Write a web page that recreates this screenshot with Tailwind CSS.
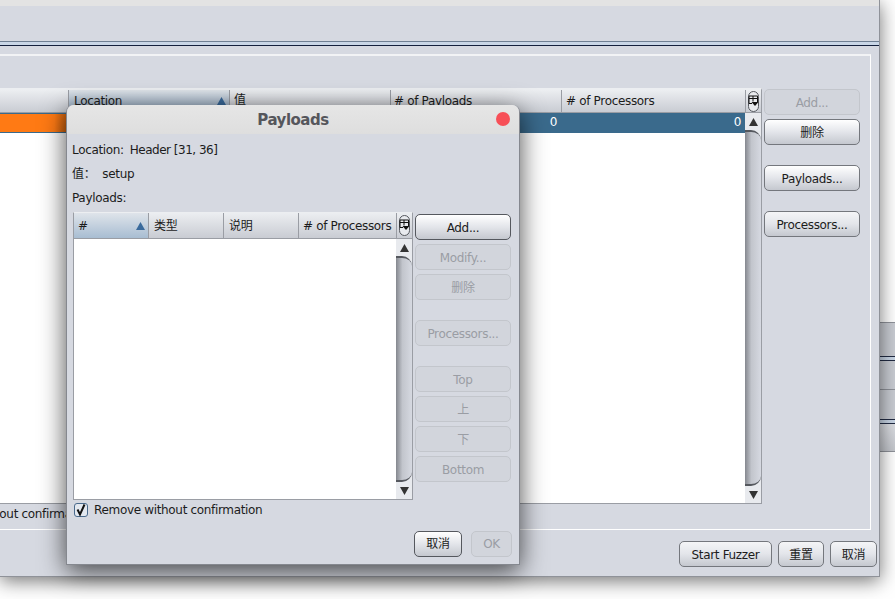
<!DOCTYPE html>
<html lang="zh">
<head>
    <meta charset="UTF-8">
    <title>Payloads</title>
    <script src="https://cdn.jsdelivr.net/npm/@tailwindcss/browser@4"></script>
</head>
<body class="bg-white">
<div class="relative w-[895px] h-[599px] overflow-hidden bg-white text-[12px] leading-[14px] tracking-[-0.33px] text-[#1c1c1c] font-['DejaVu_Sans','Noto_Sans_CJK_SC',sans-serif]">

    <!-- window peeking out behind the main one -->
    <div class="absolute left-[860px] top-[322px] w-[35px] h-[130px] bg-[#c9ccd3] border-y border-[#8f9299] flex flex-col">
        <div class="h-[33px]"></div>
        <div class="h-[5px] bg-[#c9d6e6] border-y border-[#222c44]"></div>
        <div class="h-[29px] border-b border-[#8f9299]"></div>
        <div class="h-[29px]"></div>
        <div class="h-[5px] bg-[#c9d6e6] border-y border-[#222c44]"></div>
        <div class="flex-1 bg-gradient-to-b from-[#dcdee3] to-[#c3c6cc]"></div>
    </div>

    <!-- main window -->
    <div class="absolute left-0 top-0 w-[880px] h-[577px] bg-[#d6d9e1] border-r border-b border-[#8f9299] shadow-[0_4px_18px_rgba(0,0,0,0.55)] flex flex-col">
        <div class="h-[6px] bg-[#e3e3e3] shrink-0"></div>
        <div class="h-[35px] shrink-0"></div>
        <div class="h-[5px] shrink-0 bg-[#c9d6e6] border-t border-b border-t-[#6f7f92] border-b-[#14203c]"></div>
        <div class="h-[8px] shrink-0"></div>

        <!-- tab panel -->
        <div class="w-[871px] h-[476px] shrink-0 border-t-2 border-r border-b border-t-[#f2f3f5] border-r-white border-b-white flex flex-col">
            <div class="h-[32px] shrink-0"></div>
            <div class="flex gap-[2px] h-[416px] shrink-0">
                <div class="w-[762px] h-full border-t-2 border-r border-b border-t-[#eceef1] border-r-[#9a9da4] border-b-[#9a9da4] flex flex-col bg-white">
                    <div class="h-[23px] shrink-0 flex bg-gradient-to-b from-[#eceef1] to-[#c9ccd3] border-b border-[#9a9da4] overflow-hidden whitespace-nowrap">
                        <div class="w-[69px] border-r border-[#9a9da4]"></div>
                        <div class="w-[161px] flex justify-between items-center pl-[5px] pr-[3px] border-r border-[#9a9da4] bg-gradient-to-b from-[#dfe4ea] to-[#91a9c1]">
                            <span>Location</span>
                            <svg width="9" height="8" viewBox="0 0 9 8"><path d="M4.5 0 L9 8 L0 8 Z" fill="#3a6a9c"/></svg>
                        </div>
                        <div class="w-[161px] pl-[4px] pt-[3px] border-r border-[#9a9da4]">值</div>
                        <div class="w-[171px] pl-[3px] pt-[4px] border-r border-[#9a9da4]"># of Payloads</div>
                        <div class="w-[184px] pl-[4px] pt-[4px] border-r border-[#9a9da4]"># of Processors</div>
                        <div class="flex-1 flex items-center justify-center">
                            <div class="w-[11px] h-[21px] rounded-full border border-[#55585e] bg-[#e8eaee] flex items-start justify-center pt-[3px]">
                                <svg width="11" height="12" viewBox="0 0 11 12" class="shrink-0"><path d="M1 1 H9.5 V7 M1 1 V8.5 H4 M1 3.5 H9.5 M5 1 V6.5" fill="none" stroke="#111"/><path d="M3.5 7 H10.5 L7 11 Z" fill="#111"/></svg>
                            </div>
                        </div>
                    </div>
                    <div class="flex-1 flex min-h-0">
                        <div class="flex-1 bg-white">
                            <div class="h-[20px] bg-[#3a6a8c] text-white flex pt-[2px]">
                                <div class="w-[68px] h-[18px] -mt-[1px] bg-gradient-to-r from-[#ff7a14] from-80% to-[#c9610f]"></div>
                                <div class="w-[491px] text-right pr-[2px]">0</div>
                                <div class="flex-1 text-right pr-[4px]">0</div>
                            </div>
                        </div>
                        <div class="w-[16px] flex flex-col bg-[#e8eaee]">
                            <div class="h-[17px] shrink-0 flex items-center justify-center">
                                <svg width="9" height="8" viewBox="0 0 9 8"><path d="M4.5 0 L9 8 L0 8 Z" fill="#333"/></svg>
                            </div>
                            <div class="flex-1 rounded-r-[10px] border-y-2 border-y-[#55585e] bg-gradient-to-r from-[#85888f] via-[#c2c5cc] via-40% to-[#d6d9e1]"></div>
                            <div class="h-[17px] shrink-0 flex items-center justify-center">
                                <svg width="9" height="8" viewBox="0 0 9 8"><path d="M0 0 L9 0 L4.5 8 Z" fill="#333"/></svg>
                            </div>
                        </div>
                    </div>
                </div>
                <div class="w-[96px] flex flex-col">
                    <button class="h-[26px] mt-[1px] pt-[2px] shrink-0 rounded-[5px] border border-[#c3c6cc] text-[#9a9da4] bg-[#d2d5dc]">Add...</button>
                    <button class="h-[26px] mt-[4px] pt-[2px] shrink-0 rounded-[5px] border border-[#74777d] bg-gradient-to-b from-white via-[#e3e5ea] to-[#c5c8cf]">删除</button>
                    <button class="h-[26px] mt-[20px] pt-[2px] shrink-0 rounded-[5px] border border-[#74777d] bg-gradient-to-b from-white via-[#e3e5ea] to-[#c5c8cf]">Payloads...</button>
                    <button class="h-[26px] mt-[20px] pt-[2px] shrink-0 rounded-[5px] border border-[#74777d] bg-gradient-to-b from-[#f4f5f7] via-[#e3e5ea] to-[#c5c8cf]">Processors...</button>
                </div>
            </div>
            <div class="h-[25px] shrink-0 overflow-hidden whitespace-nowrap pt-[3px]"><span class="block -ml-[75px]">Remove without confirmation</span></div>
        </div>

        <div class="flex justify-end gap-[6px] pr-[2px] pt-[11px]">
            <button class="w-[93px] h-[26px] pt-[2px] rounded-[5px] border border-[#74777d] bg-gradient-to-b from-[#f4f5f7] via-[#e3e5ea] to-[#c5c8cf]">Start Fuzzer</button>
            <button class="w-[46px] h-[26px] pt-[2px] rounded-[5px] border border-[#74777d] bg-gradient-to-b from-[#f4f5f7] via-[#e3e5ea] to-[#c5c8cf]">重置</button>
            <button class="w-[47px] h-[26px] pt-[2px] rounded-[5px] border border-[#74777d] bg-gradient-to-b from-[#f4f5f7] via-[#e3e5ea] to-[#c5c8cf]">取消</button>
        </div>
    </div>

    <!-- Payloads dialog -->
    <div class="absolute left-[66px] top-[105px] w-[454px] h-[460px] bg-[#d6d9e1] rounded-t-[7px] border-r border-b border-l border-[#85888f] shadow-[0_6px_26px_rgba(0,0,0,0.7)] flex flex-col">
        <div class="relative h-[29px] pt-[1px] shrink-0 rounded-t-[7px] bg-gradient-to-b from-[#e6e6e6] to-[#dedede] flex items-center justify-center">
            <span class="text-[15px] font-bold tracking-[-0.5px] text-[#55565c]">Payloads</span>
            <div class="absolute right-[9px] top-[7px] w-[14px] h-[14px] rounded-full bg-[#f74f57]"></div>
        </div>
        <div class="pl-[5px] pt-[9px] flex flex-col gap-[10px] h-[78px] shrink-0">
            <div class="h-[14px] flex gap-[6px]"><span>Location:</span><span class="tracking-[-0.5px]">Header [31, 36]</span></div>
            <div class="h-[14px] flex gap-[7px]"><span>值：</span><span>setup</span></div>
            <div class="h-[14px]">Payloads:</div>
        </div>
        <div class="flex pl-[6px] gap-[2px] h-[288px] shrink-0">
            <div class="w-[340px] h-full border border-t-[#eceef1] border-l-[#9a9da4] border-r-[#9a9da4] border-b-[#9a9da4] flex flex-col bg-white">
                <div class="h-[26px] shrink-0 flex items-center bg-gradient-to-b from-[#eceef1] to-[#c9ccd3] border-b border-[#9a9da4] whitespace-nowrap">
                    <div class="w-[75px] h-full flex justify-between items-center pl-[4px] pr-[3px] border-r border-[#9a9da4] bg-gradient-to-b from-[#dfe4ea] to-[#a8bdd2]">
                        <span>#</span>
                        <svg width="9" height="8" viewBox="0 0 9 8"><path d="M4.5 0 L9 8 L0 8 Z" fill="#3a6a9c"/></svg>
                    </div>
                    <div class="w-[75px] h-full flex items-center pl-[5px] border-r border-[#9a9da4]">类型</div>
                    <div class="w-[75px] h-full flex items-center pl-[5px] border-r border-[#9a9da4]">说明</div>
                    <div class="w-[98px] h-full flex items-center pl-[4px] border-r border-[#9a9da4]"># of Processors</div>
                    <div class="flex-1 flex items-center justify-center">
                        <div class="w-[11px] h-[21px] rounded-full border border-[#55585e] bg-[#e8eaee] flex items-start justify-center pt-[3px]">
                            <svg width="11" height="12" viewBox="0 0 11 12" class="shrink-0"><path d="M1 1 H9.5 V7 M1 1 V8.5 H4 M1 3.5 H9.5 M5 1 V6.5" fill="none" stroke="#111"/><path d="M3.5 7 H10.5 L7 11 Z" fill="#111"/></svg>
                        </div>
                    </div>
                </div>
                <div class="flex-1 flex min-h-0">
                    <div class="flex-1 bg-white"></div>
                    <div class="w-[16px] flex flex-col bg-[#e8eaee]">
                        <div class="h-[17px] shrink-0 flex items-center justify-center">
                            <svg width="9" height="8" viewBox="0 0 9 8"><path d="M4.5 0 L9 8 L0 8 Z" fill="#333"/></svg>
                        </div>
                        <div class="flex-1 rounded-r-[10px] border-y-2 border-y-[#55585e] bg-gradient-to-r from-[#85888f] via-[#c2c5cc] via-40% to-[#d6d9e1]"></div>
                        <div class="h-[17px] shrink-0 flex items-center justify-center">
                            <svg width="9" height="8" viewBox="0 0 9 8"><path d="M0 0 L9 0 L4.5 8 Z" fill="#333"/></svg>
                        </div>
                    </div>
                </div>
            </div>
            <div class="w-[96px] flex flex-col pt-[2px]">
                <button class="h-[26px] pt-[2px] shrink-0 rounded-[5px] border border-[#55585e] bg-gradient-to-b from-white via-[#e3e5ea] to-[#c5c8cf]">Add...</button>
                <button class="h-[26px] pt-[2px] mt-[4px] shrink-0 rounded-[5px] border border-[#c3c6cc] text-[#9a9da4] bg-[#d2d5dc]">Modify...</button>
                <button class="h-[26px] pt-[2px] mt-[4px] shrink-0 rounded-[5px] border border-[#c3c6cc] text-[#9a9da4] bg-[#d2d5dc]">删除</button>
                <button class="h-[26px] pt-[2px] mt-[20px] shrink-0 rounded-[5px] border border-[#c3c6cc] text-[#9a9da4] bg-[#d2d5dc]">Processors...</button>
                <button class="h-[26px] pt-[2px] mt-[20px] shrink-0 rounded-[5px] border border-[#c3c6cc] text-[#9a9da4] bg-[#d2d5dc]">Top</button>
                <button class="h-[26px] pt-[2px] mt-[4px] shrink-0 rounded-[5px] border border-[#c3c6cc] text-[#9a9da4] bg-[#d2d5dc]">上</button>
                <button class="h-[26px] pt-[2px] mt-[4px] shrink-0 rounded-[5px] border border-[#c3c6cc] text-[#9a9da4] bg-[#d2d5dc]">下</button>
                <button class="h-[26px] pt-[2px] mt-[4px] shrink-0 rounded-[5px] border border-[#c3c6cc] text-[#9a9da4] bg-[#d2d5dc]">Bottom</button>
            </div>
        </div>
        <div class="flex items-center gap-[6px] pl-[7px] pt-[2px] h-[18px] shrink-0">
            <svg width="14" height="14" viewBox="0 0 14 14"><rect x="0.5" y="0.5" width="13" height="13" rx="2.5" fill="#e3e8ef" stroke="#4a6a8c"/><path d="M3.5 6.5 L6 11.5 L10.5 1.5" fill="none" stroke="#111" stroke-width="2"/></svg>
            <span>Remove without confirmation</span>
        </div>
        <div class="flex justify-end gap-[9px] pr-[7px] pt-[13px]">
            <button class="w-[48px] h-[26px] rounded-[5px] border border-[#55585e] bg-gradient-to-b from-white via-[#e3e5ea] to-[#c5c8cf]">取消</button>
            <button class="w-[41px] h-[26px] rounded-[5px] border border-[#c3c6cc] text-[#9a9da4] bg-[#d2d5dc]">OK</button>
        </div>
    </div>
</div>
</body>
</html>
